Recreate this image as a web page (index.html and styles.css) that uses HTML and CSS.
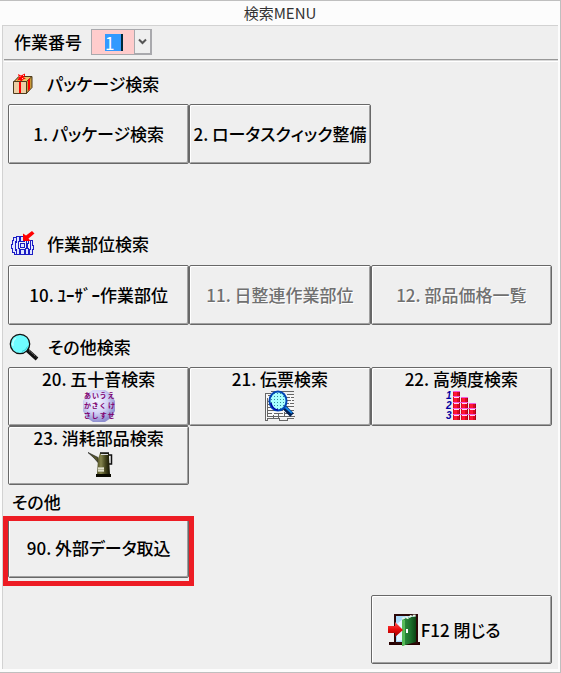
FILE: index.html
```html
<!DOCTYPE html>
<html lang="ja">
<head>
<meta charset="utf-8">
<meta name="viewport" content="width=device-width, initial-scale=1">
<title>検索MENU</title>
<link rel="stylesheet" href="styles.css">
</head>
<body>
<div class="window">
  <header class="titlebar">検索MENU</header>
  <main class="panel">
    <div class="job">
      <label for="job-number">作業番号</label>
      <div class="combo">
        <span class="combo-field"><input id="job-number" type="text" value="1"></span>
        <button class="combo-toggle" type="button" aria-label="一覧を開く">
          <svg width="9" height="7" viewBox="0 0 9 7"><path d="M1 1.5l3.5 3.5L8 1.5" fill="none" stroke="#555" stroke-width="2"/></svg>
        </button>
      </div>
    </div>

    <section class="group group-package">
      <h2>
        <span class="heading-icon">
          <svg width="20" height="22" viewBox="0 0 20 22">
            <path d="M1 9l5-5.500h13v11L13 21z" fill="#c99a38" stroke="#4d3b1d"/>
            <path d="M1 8.500L6 3.500h13l-5.500 5z" fill="#e8c666" stroke="#4d3b1d"/>
            <path d="M.5 8.500h13v12H.5z" fill="#edcfa5" stroke="#4d3b1d"/>
            <path d="M6 9h2v11H6zM15 7l2-2v11l-2 2z" fill="#f00"/>
            <path d="M5 1l3 1.500L12 .5v2.500l-2 1 3 1.500-3 1-1.500 2L6.500 7 4 7.500 6 4.500z" fill="#f00"/>
            <path d="M6.500 3.500h1M10 2.500h1M9 5.500h1" stroke="#fcb"/>
          </svg>
        </span>パッケージ検索
      </h2>
      <div class="grid">
        <button class="tile" type="button">1. パッケージ検索</button>
        <button class="tile" type="button">2. ロータスクィック整備</button>
      </div>
    </section>

    <section class="group group-part">
      <h2>
        <span class="heading-icon">
          <svg width="24" height="26" viewBox="0 0 24 26">
            <g fill="#dfe6ff" stroke="#1c1cc4" shape-rendering="crispEdges">
              <path d="M3.500 6.500h-1v3h-1v4h-1v4h1v4h2v2h2v-4h-1v-9h1v-4z"/>
              <path d="M5.500 5.500h3v5h-1v7h1v6h-3v-5h-1v-7h1z"/>
              <path d="M9.500 5.500h4v5h-4zM9.500 18.500h4v5h-4zM9.500 12.500h4v4h-4z"/>
              <path d="M15.500 8.500h2v4h-1v5h1v6h-3v-6h1z"/>
              <path d="M19.500 9.500h2v5h1v4h-1v5h-3v-5h1z"/>
            </g>
            <path d="M21 0l2.500 2.500-6 5 2 2.500H12V2.500l3 2z" fill="#f00"/>
          </svg>
        </span>作業部位検索
      </h2>
      <div class="grid">
        <button class="tile" type="button">10. ﾕｰｻﾞｰ作業部位</button>
        <button class="tile" type="button" disabled>11. 日整連作業部位</button>
        <button class="tile" type="button" disabled>12. 部品価格一覧</button>
      </div>
    </section>

    <section class="group group-other">
      <h2>
        <span class="heading-icon">
          <svg width="30" height="29" viewBox="0 0 30 29">
            <path d="M18 17l10 9" stroke="#111" stroke-width="4"/>
            <path d="M20 17.500l7.500 6.500" stroke="#777" stroke-width="1" stroke-dasharray="2 1"/>
            <circle cx="11" cy="11" r="9.700" fill="#6ffcff" stroke="#111" stroke-width="1.300"/>
            <path d="M4 13a8 8 0 0 1 3-8" fill="none" stroke="#b9ffff" stroke-width="1.500"/>
            <path d="M13 18.500a8 8 0 0 0 5.500-5" fill="none" stroke="#30cbd3" stroke-width="1"/>
          </svg>
        </span>その他検索
      </h2>
      <div class="grid">
        <button class="tile tile-icon" type="button">
          <span>20. 五十音検索</span>
          <svg width="32" height="32" viewBox="0 0 32 32">
            <defs>
              <radialGradient id="orb" cx=".4" cy=".35" r=".65">
                <stop offset="0" stop-color="#f6f6ff"/><stop offset=".55" stop-color="#d4d4f6"/><stop offset="1" stop-color="#8f8fd0"/>
              </radialGradient>
            </defs>
            <path d="M10 0h12l6 4 4 7v10l-4 7-6 4H10l-6-4-4-7V11l4-7z" fill="url(#orb)"/>
            <g class="kana">
              <text x="1 9 17 25" y="8">あいうえ</text>
              <text x="1 9 17 25" y="18">かきくけ</text>
              <text x="1 9 17 25" y="28">さしすせ</text>
            </g>
          </svg>
        </button>
        <button class="tile tile-icon" type="button">
          <span>21. 伝票検索</span>
          <svg width="30" height="32" viewBox="0 0 30 32">
            <defs>
              <pattern id="mesh" width="3" height="3" patternUnits="userSpaceOnUse">
                <rect width="3" height="3" fill="#a9ffff"/><rect width="1" height="1" fill="#358b9b"/>
              </pattern>
            </defs>
            <g fill="none" stroke="#666" shape-rendering="crispEdges">
              <path d="M1 4h28v24H4l-3 2z" fill="#f8f8f8" stroke="none"/>
              <path d="M0 3.500h6M.5 3v28M0 30.500h2v-2h12v2h8v-2h7M2.500 5.500h3M2.500 8v18h27M6 1.500h23M22 4.500h7M22 7.500h3M26 7.500h3M22 10.500h4M27 10.500h2M20 13.500h4M25 13.500h4M3 17.500h4M3 20.500h15M20 20.500h9M3 23.500h4M9 23.500h4M14 23.500h4M20 23.500h4M25 23.500h4M8.500 25v3M13.500 23v5M19.500 22v5M22 16.500h7M3 11.500h3M3 14.500h3"/>
            </g>
            <path d="M19 17l8 8" stroke="#001d50" stroke-width="5"/>
            <path d="M19 16l8 7" stroke="#1687e8" stroke-width="2"/>
            <ellipse cx="13" cy="11" rx="8.500" ry="9.500" fill="url(#mesh)" stroke="#0046b5" stroke-width="2"/>
            <path d="M6 13q1 6 7 7" fill="none" stroke="#0000a8" stroke-width="1.500"/>
          </svg>
        </button>
        <button class="tile tile-icon" type="button">
          <span>22. 高頻度検索</span>
          <svg width="32" height="32" viewBox="0 0 32 32">
            <defs>
              <linearGradient id="bar">
                <stop offset="0" stop-color="#b90020"/><stop offset=".4" stop-color="#ff102c"/><stop offset="1" stop-color="#b00018"/>
              </linearGradient>
            </defs>
            <g shape-rendering="crispEdges">
              <path d="M8 1h7v29H8zM16 7h7v23h-7zM24 13h7v17h-7z" fill="#d80a20"/>
              <path d="M9 1h3v29H9zM17 7h3v23h-3zM25 13h3v17h-3z" fill="#ff1434"/>
              <path d="M14 1h1v29h-1zM22 7h1v23h-1zM30 13h1v17h-1z" fill="#a80018"/>
              <path d="M8 1.500h7M8 6.500h7M16 7.500h7M8 12.500h15M24 13.500h7M8 18.500h23M8 24.500h23" stroke="#f05ae0"/>
              <path d="M9 7.500h5M9 13.500h5M17 13.500h5M9 19.500h5M17 19.500h5M25 19.500h5M9 25.500h5M17 25.500h5M25 25.500h5" stroke="#ffd8e8"/>
            </g>
            <g class="rank"><text x="1" y="9">1</text><text x="1" y="19">2</text><text x="1" y="29">3</text></g>
          </svg>
        </button>
        <button class="tile tile-icon tile-can" type="button">
          <span>23. 消耗部品検索</span>
          <svg width="25" height="26" viewBox="0 0 25 26">
            <defs>
              <linearGradient id="can">
                <stop offset="0" stop-color="#4b4b22"/><stop offset=".3" stop-color="#85854d"/><stop offset=".65" stop-color="#45451d"/><stop offset="1" stop-color="#111100"/>
              </linearGradient>
            </defs>
            <path d="M0 .5l10 5v5L6 6z" fill="#55552a" stroke="#222" stroke-width=".7"/>
            <path d="M19 3h4.500v9H21" fill="none" stroke="#111" stroke-width="1.500"/>
            <path d="M12 1h9v4l1 18H9l1-16z" fill="url(#can)"/>
            <path d="M12 1h9" stroke="#111" stroke-width="1.500"/>
            <path d="M13 2.500h7" stroke="#ddd"/>
            <path d="M8 22h15v3H8z" fill="#090900"/>
            <path d="M10 15h6v5h-6z" fill="#b8b89c"/><path d="M10 16.500h6M10 18.500h6" stroke="#e2e2ca"/>
          </svg>
        </button>
      </div>
    </section>

    <section class="group group-misc">
      <h2>その他</h2>
      <div class="grid">
        <div class="highlight"><button class="tile" type="button">90. 外部データ取込</button></div>
      </div>
    </section>

    <footer class="grid footer">
      <button class="tile tile-close" type="button">
        <svg width="33" height="34" viewBox="0 0 33 34">
          <defs>
            <linearGradient id="door"><stop offset="0" stop-color="#2f9440"/><stop offset=".6" stop-color="#1d702c"/><stop offset="1" stop-color="#0a4313"/></linearGradient>
            <linearGradient id="arrow" x2="0" y2="1"><stop offset="0" stop-color="#ff5555"/><stop offset=".5" stop-color="#e90b0b"/><stop offset="1" stop-color="#930000"/></linearGradient>
          </defs>
          <path d="M1 30.500h31" stroke="#260000" stroke-width="3"/>
          <path d="M7 2h22v28H7z" fill="#a9d9fa" stroke="#2c0808" stroke-width="2"/>
          <path d="M9 11l7-6v22l-7 1z" fill="#e7f7ff"/>
          <path d="M14 6l14-3v26l-11 3-3 1z" fill="url(#door)"/>
          <path d="M14 7v26l3-1V7z" fill="#54ba57"/>
          <path d="M14 6l4-2 2 1 3-2 5-.5" fill="none" stroke="#e4f5e4" stroke-width="2" stroke-dasharray="3 1"/>
          <path d="M18 16h2v4h-2z" fill="#fff"/>
          <path d="M0 13h7V9l8 8-8 7v-4H0z" fill="url(#arrow)"/>
        </svg>
        <span>F12 閉じる</span>
      </button>
    </footer>
  </main>
</div>
</body>
</html>
```
FILE: styles.css
```css
* {
  box-sizing: border-box;
}

body {
  margin: 0;
  background: #fcfcfc;
  color: #000;
  font-family: "Noto Sans CJK JP", sans-serif;
  font-size: 17px;
  line-height: 20px;
  font-feature-settings: "palt";
}

button,
input {
  margin: 0;
  padding: 0;
  border: 0;
  color: inherit;
  font: inherit;
  font-feature-settings: inherit;
}

svg {
  display: block;
  flex: none;
}

.window {
  display: flex;
  flex-direction: column;
  min-height: 100vh;
  padding: 0 2px 3px;
  border: solid #bfbfbf;
  border-width: 1px 1px 1px 0;
}

.titlebar {
  height: 24px;
  color: #333;
  font-size: 15px;
  line-height: 24px;
  text-align: center;
}

.panel {
  flex: 1;
  background: #efefef;
  border: solid #d2d2d2;
  border-width: 1px 0 0 1px;
}

.job {
  display: flex;
  align-items: center;
  gap: 9px;
  margin-left: 1px;
  padding: 3px 0 4px 10px;
  border-bottom: 1px solid #989898;
  box-shadow: 0 1px #d8d8d8, 0 2px #fff;
  font-weight: 500;
}

.combo {
  display: flex;
  width: 61px;
  height: 26px;
  background: #ffcccc;
  border: 1px solid #a9a9ad;
}

.combo-field {
  display: flex;
  flex: 1;
  align-items: center;
  justify-content: flex-end;
  padding-right: 11px;
}

.combo-field input {
  width: 18px;
  height: 17px;
  background: #3399ff;
  border-right: 2px solid #00293a;
  outline: 0;
  color: #fff;
  font-weight: 400;
  line-height: 17px;
}

.combo-toggle {
  display: grid;
  place-items: center;
  width: 17px;
  background: #efefef;
  border: solid #a9a9ad;
  border-width: 0 1px 1px;
}

.group h2 {
  display: flex;
  align-items: center;
  margin: 0;
  font-size: 17px;
  font-weight: 500;
}

.heading-icon {
  display: flex;
  justify-content: center;
  width: 30px;
  margin-right: 9px;
}

.group-package h2 {
  height: 44px;
  padding: 4px 0 0 5px;
}

.group-part h2 {
  height: 42px;
  padding-left: 5px;
}

.group-other h2 {
  height: 42px;
  padding: 2px 0 0 6px;
}

.group-misc h2 {
  height: 33px;
  padding-left: 9px;
}

.group-part {
  margin-top: 59px;
}

.grid {
  display: grid;
  grid-template-columns: repeat(3, 1fr);
  padding: 0 6px 0 5px;
}

.tile {
  width: 100%;
  height: 60px;
  background: #efefef;
  border: 1px solid #686868;
  border-radius: 2px;
  box-shadow: inset 1px 1px #fff, inset -1px -1px #a0a0a0;
  font-weight: 500;
  white-space: nowrap;
}

.tile:disabled {
  color: #707070;
  text-shadow: 1px 1px #fff;
}

.tile-icon {
  display: flex;
  flex-direction: column;
  align-items: center;
  height: 59px;
  padding-top: 1px;
}

.tile-icon svg {
  margin-top: 1px;
}

.tile-can svg {
  margin: 4px 0 0 4px;
}

.kana {
  fill: #800070;
  font-size: 7px;
  font-weight: 700;
}

.rank {
  fill: #0000a0;
  font-family: "Liberation Sans", sans-serif;
  font-size: 10px;
  font-style: italic;
  font-weight: 700;
}

.highlight {
  position: relative;
}

.highlight::after {
  position: absolute;
  inset: -2px -5px -8px;
  border: 5px solid #ed1c24;
  content: "";
  pointer-events: none;
}

.footer {
  margin-top: 17px;
  padding-bottom: 5px;
}

.tile-close {
  display: flex;
  grid-column: 3;
  align-items: center;
  height: 69px;
  padding-left: 16px;
}
```
